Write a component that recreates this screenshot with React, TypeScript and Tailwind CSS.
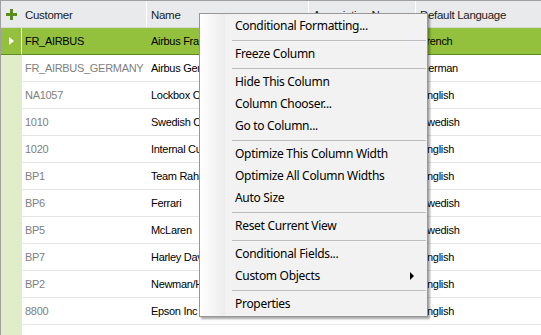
import React from 'react';

const rows = [
  { id: 'FR_AIRBUS', name: 'Airbus France', assoc: '', lang: 'French' },
  { id: 'FR_AIRBUS_GERMANY', name: 'Airbus Germany', assoc: '', lang: 'German' },
  { id: 'NA1057', name: 'Lockbox Customer', assoc: '', lang: 'English' },
  { id: '1010', name: 'Swedish Customer', assoc: '', lang: 'Swedish' },
  { id: '1020', name: 'Internal Customer', assoc: '', lang: 'English' },
  { id: 'BP1', name: 'Team Rahal', assoc: '', lang: 'English' },
  { id: 'BP6', name: 'Ferrari', assoc: '', lang: 'Swedish' },
  { id: 'BP5', name: 'McLaren', assoc: '', lang: 'Swedish' },
  { id: 'BP7', name: 'Harley Davidson', assoc: '', lang: 'English' },
  { id: 'BP2', name: 'Newman/Haas', assoc: '', lang: 'English' },
  { id: '8800', name: 'Epson Inc', assoc: '', lang: 'English' },
];

// menu layout: null = separator
const menuItems: Array<{ label: string; sub?: boolean } | null> = [
  { label: 'Conditional Formatting...' },
  null,
  { label: 'Freeze Column' },
  null,
  { label: 'Hide This Column' },
  { label: 'Column Chooser...' },
  { label: 'Go to Column...' },
  null,
  { label: 'Optimize This Column Width' },
  { label: 'Optimize All Column Widths' },
  { label: 'Auto Size' },
  null,
  { label: 'Reset Current View' },
  null,
  { label: 'Conditional Fields...' },
  { label: 'Custom Objects', sub: true },
  null,
  { label: 'Properties' },
];

function ContextMenu() {
  return (
    <div className="absolute left-[199px] top-[13px] w-[229px] h-[304px] bg-[#f2f2f2] border border-[#979797] shadow-[2px_2px_2px_rgba(0,0,0,0.35)] py-[1px] font-['Noto_Sans',sans-serif] text-[12px] tracking-[-0.3px] text-black">
      <div className="absolute left-0 top-0 bottom-0 w-[25px] bg-gradient-to-r from-white to-[#ececec]" />
      <div className="relative flex flex-col">
        {menuItems.map((item, i) =>
          item === null ? (
            <div key={i} className="h-[6px] flex items-center pl-[32px] pr-[1px]">
              <div className="h-px w-full bg-[#bdbdbd]" />
            </div>
          ) : (
            <div key={i} className="h-[22px] flex items-center pl-[35px] pr-[12px] relative">
              <span className="leading-none">{item.label}</span>
              {item.sub && (
                <span className="absolute right-[13px] top-[7px] w-0 h-0 border-y-[4px] border-y-transparent border-l-[4px] border-l-black" />
              )}
            </div>
          )
        )}
      </div>
    </div>
  );
}

export default function App() {
  return (
    <div className="relative w-[541px] h-[335px] bg-white overflow-hidden font-['Liberation_Sans',Arial,sans-serif] text-[11px] tracking-[-0.3px]">
      <div className="border-l border-t border-[#a0a0a0] h-full flex flex-col">
        {/* header */}
        <div className="flex h-[27px] bg-[#e9eaec] border-b border-[#d8d8d8] text-[#1a1a1a] shrink-0 text-[11.5px]">
          <div className="w-[21px] flex items-center justify-center">
            <svg width="11" height="11" viewBox="0 0 11 11">
              <rect x="4" y="0" width="3" height="11" fill="#5b8c1c" />
              <rect x="0" y="4" width="11" height="3" fill="#5b8c1c" />
            </svg>
          </div>
          <div className="w-[125px] pl-[3px] pt-[6px] border-r border-white">Customer</div>
          <div className="w-[162px] pl-[4px] pt-[6px] border-r border-white">Name</div>
          <div className="w-[107px] pl-[4px] pt-[6px] border-r border-white">Association No</div>
          <div className="flex-1 pl-[4px] pt-[6px]">Default Language</div>
        </div>
        {/* body */}
        <div className="flex flex-1">
          <div className="w-[21px] bg-[#e1ecc9] flex flex-col">
            <div className="h-[27px] bg-[#94c13d] border-b border-[#5f8c1f] border-r border-r-white flex items-center justify-center">
              <span className="w-0 h-0 border-y-[4px] border-y-transparent border-l-[5px] border-l-white" />
            </div>
          </div>
          <div className="flex-1 flex flex-col">
            {rows.map((r, i) => (
              <div
                key={r.id}
                className={`flex h-[27px] items-center border-b ${
                  i === 0 ? 'bg-[#94c13d] border-[#5f8c1f]' : 'border-[#e6e6e6]'
                }`}
              >
                <div className={`w-[125px] pl-[3px] ${i === 0 ? 'text-black' : 'text-[#808080]'}`}>{r.id}</div>
                <div className="w-[162px] pl-[4px] text-black whitespace-nowrap overflow-hidden">{r.name}</div>
                <div className="w-[107px] pl-[4px]">{r.assoc}</div>
                <div className="flex-1 pl-[4px] text-black">{r.lang}</div>
              </div>
            ))}
          </div>
        </div>
      </div>
      <ContextMenu />
    </div>
  );
}
